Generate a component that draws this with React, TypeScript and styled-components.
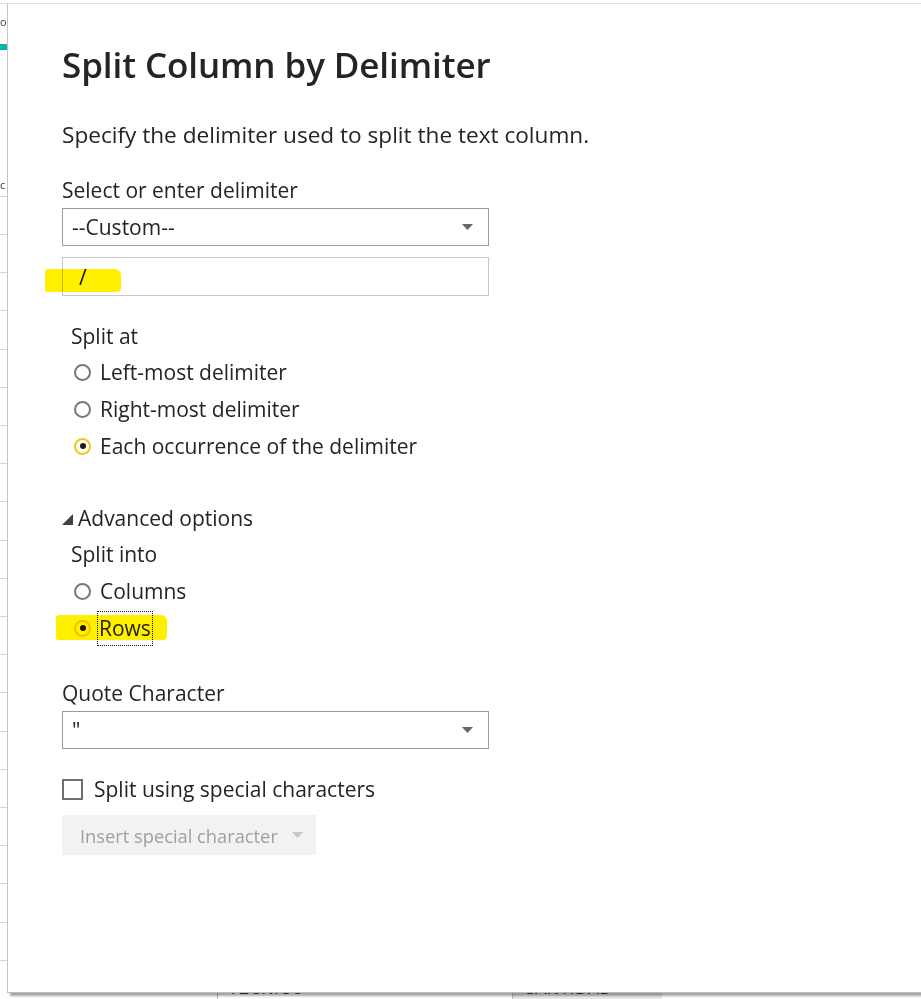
import React from "react";
import styled, { createGlobalStyle } from "styled-components";

const Global = createGlobalStyle`
  html, body { margin: 0; padding: 0; background: #ffffff; }
  body { font-family: "Open Sans", "Noto Sans", sans-serif; }
  * { box-sizing: border-box; }
`;

const Page = styled.div`
  position: relative;
  width: 921px;
  height: 999px;
  overflow: hidden;
  background: #ffffff;
`;

/* ---------- background spreadsheet ---------- */
const Sheet = styled.div`
  display: flex;
  flex-direction: column;
  width: 921px;
  height: 999px;
`;

const SheetHeader = styled.div`
  height: 48px;
  width: 7px;
  border-top: 1px solid #dedede;
  margin-top: 3px;
  display: flex;
  flex-direction: column;
`;

const StripText = styled.div<{ $align: string }>`
  flex: 1;
  display: flex;
  align-items: ${(p) => p.$align};
  font-family: "Open Sans", sans-serif;
  font-size: 11px;
  line-height: 14px;
  color: #3a3a3a;
  padding-bottom: 4px;
`;

const TealBar = styled.div`
  height: 6px;
  background: #01b8aa;
`;

const ColumnHead = styled.div`
  width: 7px;
  height: 149px;
  display: flex;
  border-bottom: 1px solid #d4d4d4;
`;

const SheetRow = styled.div`
  width: 7px;
  height: 38.85px;
  border-bottom: 1px solid #d4d4d4;
`;

const SheetGap = styled.div`
  height: 15px;
`;

const BottomStrip = styled.div`
  display: flex;
  height: 24px;
`;

const BottomCell = styled.div<{ $w: number; $shade?: boolean; $line?: boolean }>`
  width: ${(p) => p.$w}px;
  flex: none;
  background: ${(p) => (p.$shade ? "#e9e9e9" : "transparent")};
  border-left: ${(p) => (p.$line ? "1px solid #b9b9b9" : "none")};
  padding-left: 10px;
  font-family: "DejaVu Sans Condensed", "DejaVu Sans", sans-serif;
  font-size: 19px;
  line-height: 22px;
  color: #3a3a3a;
  overflow: hidden;
  white-space: nowrap;
`;

/* ---------- dialog ---------- */
const Dialog = styled.div`
  position: absolute;
  left: 7px;
  top: 3px;
  width: 960px;
  height: 990px;
  background: #ffffff;
  border-left: 1px solid #c4c4c4;
  border-top: 1px solid #e2e2e2;
  border-bottom: 1px solid #bdbdbd;
  box-shadow: 3px 3px 2px rgba(0, 0, 0, 0.35);
  padding: 40.5px 0 0 54px;
  display: flex;
  flex-direction: column;
  align-items: flex-start;
  color: #252423;
`;

const Title = styled.h1`
  margin: 0;
  font-family: "Open Sans", sans-serif;
  font-weight: 600;
  font-size: 35px;
  line-height: 40px;
  letter-spacing: -0.1px;
  color: #252423;
  white-space: nowrap;
`;

const Text = styled.div<{ $mt: number; $indent?: number; $size?: number }>`
  margin-top: ${(p) => p.$mt}px;
  margin-left: ${(p) => p.$indent ?? 0}px;
  font-size: ${(p) => p.$size ?? 21}px;
  line-height: 28px;
  color: #252423;
  white-space: nowrap;
`;

const Select = styled.div<{ $mt: number }>`
  margin-top: ${(p) => p.$mt}px;
  width: 427px;
  height: 38px;
  border: 1px solid #9c9c9c;
  display: flex;
  align-items: center;
  justify-content: space-between;
  padding: 0 15px 0 9px;
  font-size: 21px;
  color: #252423;
`;

const Caret = styled.svg<{ $c?: string }>`
  width: 11px;
  height: 6px;
  flex: none;
  fill: ${(p) => p.$c ?? "#666666"};
`;

const InputWrap = styled.div`
  position: relative;
  margin-top: 11px;
`;

const Input = styled.div`
  width: 427px;
  height: 39px;
  border: 1px solid #c8c8c8;
  display: flex;
  align-items: center;
  padding-left: 16px;
  font-size: 21px;
  color: #111111;
`;

const Highlight = styled.div<{ $l: number; $t: number; $w: number; $h: number }>`
  position: absolute;
  left: ${(p) => p.$l}px;
  top: ${(p) => p.$t}px;
  width: ${(p) => p.$w}px;
  height: ${(p) => p.$h}px;
  background: #fff000;
  mix-blend-mode: multiply;
  border-radius: 3px 6px 4px 2px;
  pointer-events: none;
`;

const RadioGroup = styled.div<{ $mt: number }>`
  margin-top: ${(p) => p.$mt}px;
  margin-left: 9px;
  display: flex;
  flex-direction: column;
`;

const RadioRow = styled.div`
  position: relative;
  height: 37px;
  display: flex;
  align-items: center;
  gap: 9px;
  padding-left: 3px;
  font-size: 21px;
  color: #252423;
  white-space: nowrap;
`;

const RadioCircle = styled.span<{ $checked?: boolean }>`
  width: 17px;
  height: 17px;
  flex: none;
  border-radius: 50%;
  border: 2px solid ${(p) => (p.$checked ? "#f2c811" : "#787878")};
  display: flex;
  align-items: center;
  justify-content: center;
  &::after {
    content: "";
    display: ${(p) => (p.$checked ? "block" : "none")};
    width: 6px;
    height: 6px;
    border-radius: 50%;
    background: #1b1b1b;
  }
`;

const FocusLabel = styled.span`
  outline: 1px dotted #111111;
  padding: 3px 1px 4px 1px;
  margin-left: -2px;
  line-height: 26px;
`;

const Advanced = styled.div`
  margin-top: 39.5px;
  display: flex;
  align-items: center;
  gap: 5px;
  font-size: 21px;
  line-height: 28px;
  color: #252423;
`;

const Tri = styled.svg`
  width: 11px;
  height: 11px;
  fill: #404040;
  margin-top: 3px;
`;

const CheckRow = styled.div`
  margin-top: 26px;
  height: 28px;
  display: flex;
  align-items: center;
  gap: 11px;
  font-size: 21px;
  color: #252423;
`;

const Box = styled.span`
  width: 21px;
  height: 21px;
  flex: none;
  border: 2px solid #6f6f6f;
`;

const Button = styled.div`
  margin-top: 12px;
  width: 254px;
  height: 40px;
  background: #f3f2f1;
  display: flex;
  align-items: center;
  gap: 14px;
  padding-left: 18px;
  font-size: 18.3px;
  color: #a19f9d;
`;

export default function App() {
  const rows = Array.from({ length: 20 });
  return (
    <>
      <Global />
      <Page>
        <Sheet>
          <SheetHeader>
            <StripText $align="center">o</StripText>
            <TealBar />
          </SheetHeader>
          <ColumnHead>
            <StripText $align="flex-end">c</StripText>
          </ColumnHead>
          {rows.map((_, i) => (
            <SheetRow key={i} />
          ))}
          <SheetGap />
          <BottomStrip>
            <BottomCell $w={217} />
            <BottomCell $w={295} $line>TECNICO</BottomCell>
            <BottomCell $w={150} $shade $line>CANTIDAD</BottomCell>
          </BottomStrip>
        </Sheet>

        <Dialog>
          <Title>Split Column by Delimiter</Title>
          <Text $mt={36.5} $size={22.6}>
            Specify the delimiter used to split the text column.
          </Text>
          <Text $mt={27}>Select or enter delimiter</Text>
          <Select $mt={4}>
            <span>--Custom--</span>
            <Caret viewBox="0 0 11 6">
              <polygon points="0,0 11,0 5.5,6" />
            </Caret>
          </Select>
          <InputWrap>
            <Input>/</Input>
            <Highlight $l={-17} $t={12} $w={76} $h={23} />
          </InputWrap>
          <Text $mt={26} $indent={9}>Split at</Text>
          <RadioGroup $mt={3.5}>
            <RadioRow>
              <RadioCircle />
              Left-most delimiter
            </RadioRow>
            <RadioRow>
              <RadioCircle />
              Right-most delimiter
            </RadioRow>
            <RadioRow>
              <RadioCircle $checked />
              Each occurrence of the delimiter
            </RadioRow>
          </RadioGroup>
          <Advanced>
            <Tri viewBox="0 0 11 11">
              <polygon points="11,0 11,11 0,11" />
            </Tri>
            Advanced options
          </Advanced>
          <Text $mt={8} $indent={9}>Split into</Text>
          <RadioGroup $mt={4.5}>
            <RadioRow>
              <RadioCircle />
              Columns
            </RadioRow>
            <RadioRow>
              <RadioCircle $checked />
              <FocusLabel>Rows</FocusLabel>
              <Highlight $l={-15} $t={5} $w={111} $h={25} />
            </RadioRow>
          </RadioGroup>
          <Text $mt={32.5}>Quote Character</Text>
          <Select $mt={4}>
            <span>"</span>
            <Caret viewBox="0 0 11 6">
              <polygon points="0,0 11,0 5.5,6" />
            </Caret>
          </Select>
          <CheckRow>
            <Box />
            Split using special characters
          </CheckRow>
          <Button>
            Insert special character
            <Caret $c="#c8c6c4" viewBox="0 0 11 6">
              <polygon points="0,0 11,0 5.5,6" />
            </Caret>
          </Button>
        </Dialog>
      </Page>
    </>
  );
}
